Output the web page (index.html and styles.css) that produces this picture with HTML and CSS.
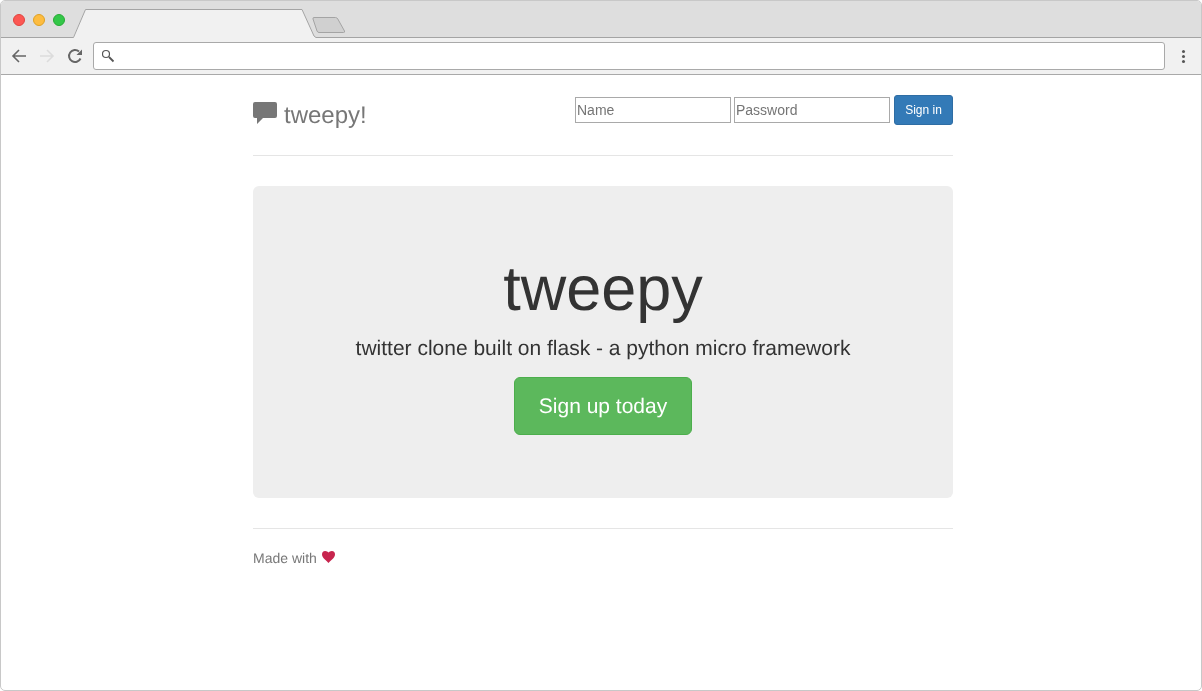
FILE: index.html
```html
<!DOCTYPE html>
<html lang="en">
<head>
    <meta charset="UTF-8">
    <title>tweepy</title>
    <link rel="stylesheet" href="styles.css">
</head>
<body>
    <div class="window">
        <div class="tabbar">
            <div class="lights">
                <span class="light red"></span>
                <span class="light yellow"></span>
                <span class="light green"></span>
            </div>
            <svg class="tabs" width="280" height="37" viewBox="0 0 280 37">
                <path d="M0 37V36.500L12.500 8.500H229L241 35L243 36.500V37Z" fill="#f1f1f1"/>
                <path d="M0 36.500H.5L12.500 8.500H229L241 35L243 36.500" fill="none" stroke="#a4a4a4"/>
                <path d="M241 16.500H262.500Q264 16.500 264.800 18L271.500 30Q272 31.500 270.500 31.500H246Q244.700 31.500 244 30L240 18Q239.700 16.500 241 16.500Z" fill="#d0d0d0" stroke="#a4a4a4"/>
            </svg>
        </div>
        <div class="toolbar">
            <svg class="nav-icon" width="16" height="16" viewBox="0 0 16 16" fill="none" stroke="#666" stroke-width="1.600">
                <path d="M15 8H2M8 2L2 8L8 14"/>
            </svg>
            <svg class="nav-icon" width="16" height="16" viewBox="0 0 16 16" fill="none" stroke="#dcdcdc" stroke-width="1.600">
                <path d="M1 8H14M8 2L14 8L8 14"/>
            </svg>
            <svg class="nav-icon" width="16" height="16" viewBox="0 0 16 16" fill="none">
                <path d="M13.500 10.500A6 6 0 1 1 12 3.500" stroke="#666" stroke-width="2"/>
                <path d="M9.500 7H15V1.500Z" fill="#666"/>
            </svg>
            <div class="urlbar">
                <svg width="14" height="14" viewBox="0 0 14 14" fill="none" stroke="#555" stroke-width="1.200">
                    <circle cx="5" cy="5" r="3.500"/>
                    <path d="M8 8L12.500 12.500" stroke-width="1.800"/>
                </svg>
            </div>
            <div class="menu-dots">
                <span></span><span></span><span></span>
            </div>
        </div>

        <div class="page">
            <div class="container">
                <div class="header">
                    <h3 class="brand">
                        <svg class="brand-icon" width="24" height="22" viewBox="0 0 24 22">
                            <path d="M2 0H22Q24 0 24 2V14Q24 16 22 16H10L4 22V16H2Q0 16 0 14V2Q0 0 2 0Z" fill="#777"/>
                        </svg>
                        tweepy!
                    </h3>
                    <form class="login">
                        <input class="login-input" type="text" placeholder="Name">
                        <input class="login-input" type="password" placeholder="Password">
                        <button class="btn btn-signin" type="button">Sign in</button>
                    </form>
                </div>

                <div class="jumbotron">
                    <h1>tweepy</h1>
                    <p class="lead">twitter clone built on flask - a python micro framework</p>
                    <a href="#" class="btn btn-signup">Sign up today</a>
                </div>

                <div class="footer">
                    Made with
                    <svg class="heart" width="13" height="12" viewBox="0 0 13 12">
                        <path d="M6.500 12C5 10 0 7 0 3.500Q0 0 3.200 0Q5.500 0 6.500 1.500Q7.500 0 9.800 0Q13 0 13 3.500C13 7 8 10 6.500 12Z" fill="#c7254e"/>
                    </svg>
                </div>
            </div>
        </div>
    </div>
</body>
</html>
```

FILE: styles.css
```css
* {
    box-sizing: border-box;
}
html, body {
    margin: 0;
    height: 100%;
}
body {
    font-family: "Liberation Sans", Arial, sans-serif;
    font-size: 14px;
    line-height: 1.42857;
    color: #333;
    background: #fff;
    text-rendering: geometricPrecision;
}
.window {
    height: 691px;
    border: 1px solid #c8c8c8;
    border-radius: 5px;
    overflow: hidden;
    display: flex;
    flex-direction: column;
    will-change: transform;
}

/* browser chrome */
.tabbar {
    height: 37px;
    background: #dedede;
    border-bottom: 1px solid #a4a4a4;
    display: flex;
    align-items: flex-start;
    flex-shrink: 0;
}
.lights {
    display: flex;
    gap: 8px;
    padding: 13px 0 0 12px;
    width: 72px;
}
.light {
    width: 12px;
    height: 12px;
    border-radius: 50%;
}
.red { background: #fc5753; border: 1px solid #e0443e; }
.yellow { background: #fdbc40; border: 1px solid #dea123; }
.green { background: #33c748; border: 1px solid #27aa35; }
.tabs {
    display: block;
    flex: none;
}
.toolbar {
    height: 37px;
    background: #f1f1f1;
    border-bottom: 1px solid #a9a9a9;
    display: flex;
    align-items: center;
    padding: 0 0 0 10px;
    flex-shrink: 0;
}
.nav-icon {
    margin-right: 12px;
    flex-shrink: 0;
}
.urlbar {
    flex: 1;
    height: 28px;
    margin-left: -2px;
    background: #fff;
    border: 1px solid #a9a9a9;
    border-radius: 3px;
    display: flex;
    align-items: center;
    padding-left: 7px;
}
.menu-dots {
    width: 36px;
    display: flex;
    flex-direction: column;
    align-items: center;
    gap: 2px;
}
.menu-dots span {
    width: 3px;
    height: 3px;
    border-radius: 50%;
    background: #555;
}

/* page */
.page {
    flex: 1;
    padding-left: 252px;
}
.container {
    width: 700px;
}
.header {
    height: 81px;
    border-bottom: 1px solid #e5e5e5;
    display: flex;
    justify-content: space-between;
    align-items: flex-start;
    padding-top: 20px;
}
.brand {
    margin: 0;
    padding-top: 6px;
    font-size: 24px;
    font-weight: 500;
    line-height: 30px;
    color: #777;
    display: flex;
    align-items: center;
    gap: 7px;
}
.brand-icon {
    margin-top: -6px;
}
.login {
    display: flex;
    align-items: center;
    margin: 0;
}
.login-input {
    width: 156px;
    height: 26px;
    margin-right: 3px;
    padding: 1px;
    border: 1px solid #a9a9a9;
    font-family: inherit;
    font-size: 14px;
    outline: none;
}
.login-input::placeholder {
    color: #757575;
}
.btn {
    display: inline-block;
    border: 1px solid transparent;
    color: #fff;
    text-decoration: none;
    text-align: center;
    font-family: inherit;
}
.btn-signin {
    width: 59px;
    height: 30px;
    margin-left: 1px;
    padding: 0;
    font-size: 12px;
    line-height: 1.5;
    background: #337ab7;
    border-color: #2e6da4;
    border-radius: 3px;
}
.jumbotron {
    margin-top: 30px;
    height: 312px;
    background: #eee;
    border-radius: 6px;
    text-align: center;
    padding-top: 69px;
}
.jumbotron h1 {
    margin: 0;
    font-size: 63px;
    font-weight: 500;
    line-height: 1.1;
}
.lead {
    margin: 10px 0 13px;
    font-size: 21px;
    font-weight: 300;
    line-height: 1.4;
}
.btn-signup {
    padding: 15px 24px 13px;
    font-size: 21px;
    line-height: 28px;
    background: #5cb85c;
    border-color: #4cae4c;
    border-radius: 6px;
}
.footer {
    margin-top: 30px;
    border-top: 1px solid #e5e5e5;
    padding-top: 20px;
    color: #777;
    display: flex;
    align-items: center;
    gap: 5px;
}
.heart {
    margin-top: -4px;
}
```
